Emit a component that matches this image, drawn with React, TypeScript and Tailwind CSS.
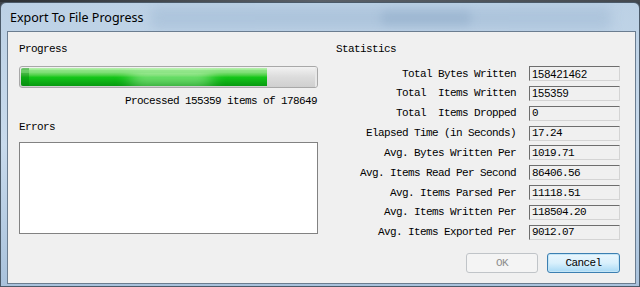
import React from "react";

const mono = { fontFamily: '"Liberation Mono", "DejaVu Sans Mono", monospace' } as React.CSSProperties;

const rows: { label: string; value: string; sans?: boolean }[] = [
  { label: "Total Bytes Written", value: "158421462", sans: true },
  { label: "Total  Items Written", value: "155359", sans: true },
  { label: "Total  Items Dropped", value: "0" },
  { label: "Elapsed Time (in Seconds)", value: "17.24" },
  { label: "Avg. Bytes Written Per", value: "1019.71" },
  { label: "Avg. Items Read Per Second", value: "86406.56" },
  { label: "Avg. Items Parsed Per", value: "11118.51" },
  { label: "Avg. Items Written Per", value: "118504.20" },
  { label: "Avg. Items Exported Per", value: "9012.07" },
];

export default function App() {
  return (
    <div className="w-[640px] h-[287px] overflow-hidden bg-[#3f454c] flex flex-col">
      <div className="h-[2px] bg-gradient-to-r from-[#2e3236] via-[#5a6068] to-[#44494f]" />
      <div className="flex-1 flex flex-col rounded-t-[6px] border border-[#4b5a69] bg-gradient-to-b from-[#bcd1e5] via-[#c8daec] to-[#a9c2dc] relative overflow-hidden">
        <div className="absolute left-[150px] top-[4px] w-[460px] h-[22px] bg-[#a3bcd6] opacity-60 blur-[6px] rounded" />
        <div className="absolute left-[380px] top-[8px] w-[90px] h-[14px] bg-[#8eaac8] opacity-50 blur-[5px] rounded" />
        <div className="h-[28px] flex items-center pl-[9px] pt-[2px] relative">
          <span className="text-[12.5px] text-black" style={{ fontFamily: '"Noto Sans", "Open Sans", sans-serif' }}>
            Export To File Progress
          </span>
        </div>
        <div className="flex-1 ml-[6px] mr-[3px] mb-[2px] border border-[#6b7d90] bg-[#f0f0f0] flex relative" style={mono}>
          <div className="ml-[11px] w-[299px] flex flex-col text-[11px] tracking-[-0.6px] leading-[12px] text-black">
            <div className="mt-[11px] h-[12px]">Progress</div>
            <div className="mt-[11px] h-[22px] w-[299px] rounded-[3px] border border-[#a8a8a8] bg-gradient-to-b from-[#f2f2f2] via-[#dcdcdc] to-[#cfcfcf] p-[1px] relative overflow-hidden">
              <div className="h-full w-[246px] rounded-l-[2px] bg-gradient-to-b from-[#b8f2ae] via-[#14c81a] to-[#079a10] relative overflow-hidden">
                <div className="absolute inset-y-0 left-0 w-[8px] bg-[#06800e] opacity-40" />
                <div className="absolute top-0 bottom-0 left-[110px] w-[80px] bg-[#c8f7c0] opacity-60 blur-[8px]" />
                <div className="absolute top-[2px] left-0 right-0 h-[3px] bg-[#7fe07a] opacity-50" />
              </div>
              <div className="absolute top-0 bottom-0 right-0 w-[2px] bg-[#e8e8e8]" />
            </div>
            <div className="mt-[7px] h-[12px] text-right pr-[1px]">Processed 155359 items of 178649</div>
            <div className="mt-[14px] h-[12px]">Errors</div>
            <div className="mt-[9px] h-[92px] w-[299px] bg-white border border-[#828282]" />
          </div>
          <div className="ml-[18px] w-[285px] flex flex-col text-[11px] tracking-[-0.6px] leading-[12px] text-black">
            <div className="mt-[11px] h-[12px]">Statistics</div>
            <div className="mt-[11px] grid grid-cols-[180px_91px] gap-x-[13px] gap-y-[4.85px]">
              {rows.map((r) => (
                <React.Fragment key={r.label}>
                  <div className="h-[15px] flex items-center justify-end whitespace-pre">{r.label}</div>
                  <div className="h-[15px] border-t border-l border-t-[#6e6e6e] border-l-[#6e6e6e] border-r border-b border-r-[#d4d4d4] border-b-[#d4d4d4] bg-[#f0f0f0] flex items-center pl-[2px]">
                    <span
                      className={r.sans ? "text-[11px] tracking-normal" : "text-[11px]"}
                      style={r.sans ? { fontFamily: '"Liberation Sans", Arial, sans-serif' } : undefined}
                    >
                      {r.value}
                    </span>
                  </div>
                </React.Fragment>
              ))}
            </div>
            <div className="mt-[13px] flex justify-end gap-[9px] mr-[1px]">
              <div className="w-[72px] h-[20px] rounded-[3px] border border-[#c0c4c8] bg-[#f4f4f4] flex items-center justify-center text-[#8d8d8d]">
                OK
              </div>
              <div className="w-[73px] h-[20px] rounded-[3px] border border-[#3c7fb1] bg-gradient-to-b from-[#eaf6fd] via-[#d9f0fc] to-[#a7d9f5] flex items-center justify-center shadow-[inset_0_0_0_1px_#c4e5f6]">
                Cancel
              </div>
            </div>
          </div>
        </div>
      </div>
    </div>
  );
}
